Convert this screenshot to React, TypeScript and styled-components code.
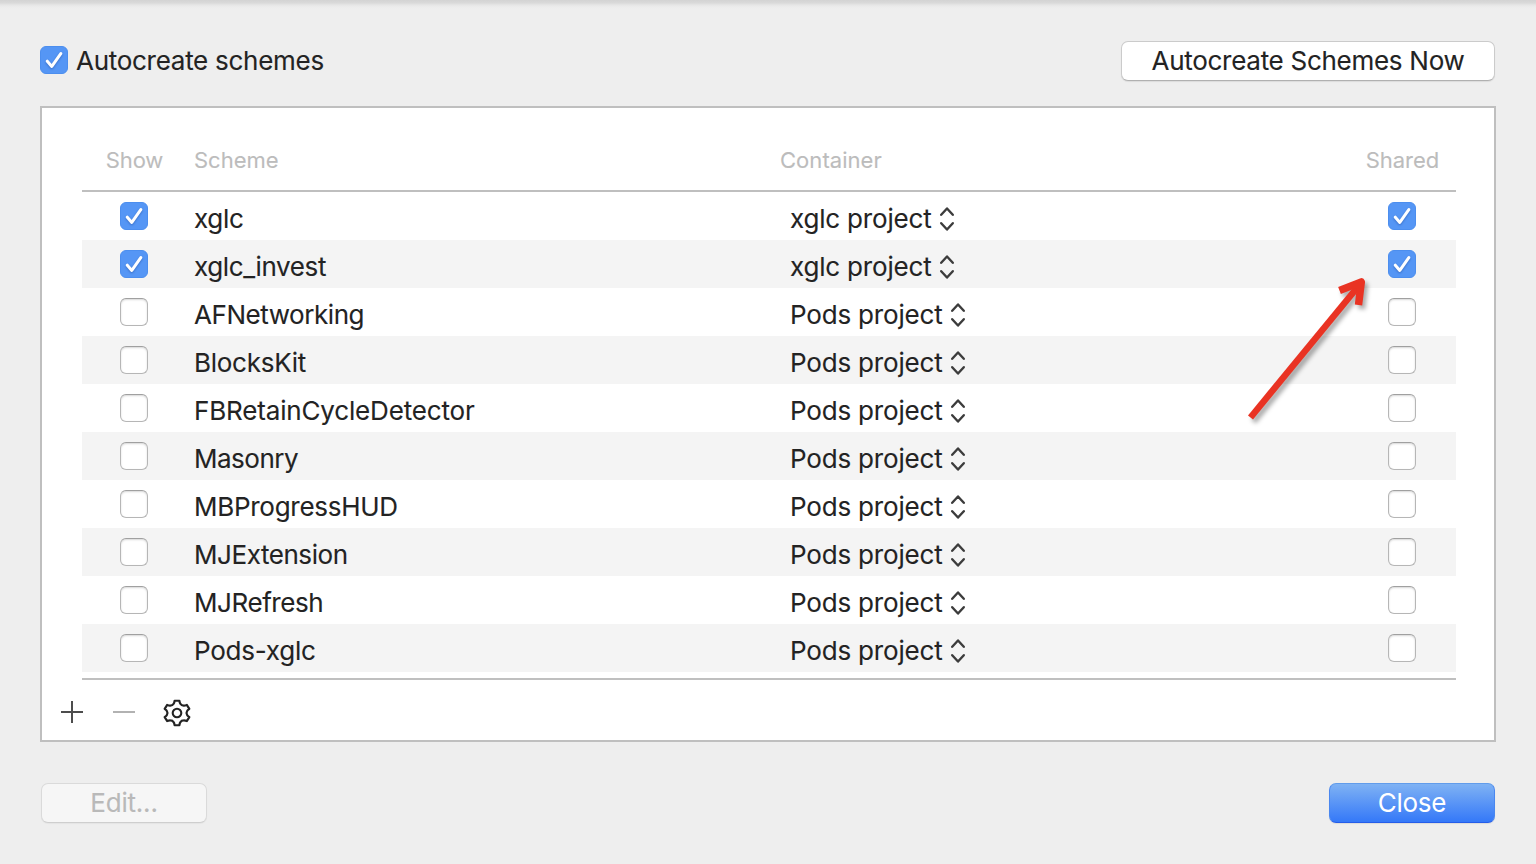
import React from 'react';
import styled, { createGlobalStyle, css } from 'styled-components';

const GlobalStyle = createGlobalStyle`
  * { box-sizing: border-box; }
  html, body, #root { height: 100%; }
  body {
    margin: 0;
    overflow: hidden;
    background: #eeeeee;
    color: #232323;
    font-family: Inter, 'Liberation Sans', sans-serif;
    font-size: 26px;
    line-height: 32px;
  }
`;

const Sheet = styled.main`
  position: relative;
  display: flex;
  flex-direction: column;
  width: 1536px;
  height: 864px;
  padding: 41px 40px 0;
  background: linear-gradient(#d3d3d3 0, #dadada 3px, #e6e6e6 5px, #ececec 7px, #eeeeee 9px);
`;

const TopBar = styled.header`
  display: flex;
  justify-content: space-between;
  height: 65px;
  padding-right: 1px;
`;

const CheckLabel = styled.label`
  display: flex;
  align-items: center;
  gap: 8px;
  height: 38px;
`;

const Text = styled.span<{ $spacing?: number }>`
  white-space: nowrap;
  letter-spacing: ${(p) => p.$spacing ?? 0}px;
  -webkit-text-stroke: 0.1px currentColor;
`;

const LabelText = styled(Text)`
  padding-top: 2px;
`;

const PushButton = styled.button<{ $width: number; $kind?: 'primary' | 'disabled' }>`
  width: ${(p) => p.$width}px;
  height: 40px;
  padding: 0;
  border: 1px solid #cbcbcb;
  border-bottom-color: #b0b0b0;
  border-radius: 7px;
  background: #ffffff;
  box-shadow: 0 1px 1px rgba(0, 0, 0, 0.08);
  color: #232323;
  font: inherit;
  line-height: 38px;
  ${(p) => p.$kind === 'disabled' && css`
    border-color: #dadada;
    border-bottom-color: #cecece;
    background: #f6f6f6;
    box-shadow: 0 1px 1px rgba(0, 0, 0, 0.04);
    color: #b9b9b9;
  `}
  ${(p) => p.$kind === 'primary' && css`
    border-color: #619ceb #4a87ef #255de9;
    background: linear-gradient(#7fb2f4, #3478f8);
    color: #ffffff;
    ${Text} { -webkit-text-stroke: 0; }
  `}
`;

const Panel = styled.section`
  display: flex;
  flex-direction: column;
  height: 636px;
  padding: 0 38px 0 40px;
  border: 2px solid #bfbfbf;
  background: #ffffff;
`;

const columns = css`
  display: grid;
  grid-template-columns: 104px 594px 568px 108px;
  align-items: center;
`;

const Cell = styled.div<{ $center?: boolean; $indent?: number }>`
  display: flex;
  align-items: center;
  justify-content: ${(p) => (p.$center ? 'center' : 'flex-start')};
  gap: 7px;
  height: 100%;
  padding-top: ${(p) => (p.$center ? 0 : 6)}px;
  padding-left: ${(p) => p.$indent ?? 0}px;
`;

const HeaderRow = styled.div`
  ${columns}
  height: 84px;
  padding-top: 22px;
  border-bottom: 2px solid #bfbfbf;
  color: #bcbcbc;
  font-size: 22px;
  line-height: 28px;
  ${Cell} { padding-top: 0; }
`;

const Rows = styled.div`
  height: 488px;
  border-bottom: 2px solid #bfbfbf;
`;

const Row = styled.div`
  ${columns}
  height: 48px;
  &:nth-child(even) { background: #f4f4f4; }
`;

const Box = styled.span<{ $on: boolean }>`
  display: block;
  width: 28px;
  height: 28px;
  border: 1px solid ${(p) => (p.$on ? '#4c8eee' : '#b6b6b6')};
  border-top-color: ${(p) => (p.$on ? '#4c8eee' : '#a0a0a0')};
  border-radius: 6px;
  background: ${(p) => (p.$on ? '#5596f5' : '#ffffff')};
  box-shadow: ${(p) => (p.$on ? 'none' : 'inset 0 1px 2px rgba(0, 0, 0, 0.16)')};
  svg {
    display: block;
    filter: drop-shadow(0 1px 1px rgba(20, 60, 140, 0.45));
  }
`;

const Tools = styled.div`
  display: flex;
  align-items: center;
  height: 60px;
  margin-left: -21px;
  padding-top: 4px;
  svg { display: block; }
`;

const BottomBar = styled.footer`
  display: flex;
  justify-content: space-between;
  padding: 41px 1px 0;
`;

const Pointer = styled.svg`
  position: absolute;
  left: 1240px;
  top: 268px;
  overflow: visible;
  filter: drop-shadow(3px 4px 2px rgba(0, 0, 0, 0.32));
`;

function Checkbox({ on }: { on: boolean }) {
  return (
    <Box $on={on}>
      {on && (
        <svg width="26" height="26" viewBox="0 0 26 26" fill="none">
          <path d="M6.300 14.200L10.800 19.400L19.800 6.600" stroke="#fff" strokeWidth="3" strokeLinecap="round" strokeLinejoin="round" />
        </svg>
      )}
    </Box>
  );
}

function Stepper() {
  return (
    <svg width="16" height="26" viewBox="0 0 16 26" fill="none" stroke="#3c3c3c" strokeWidth="2.4" strokeLinecap="round" strokeLinejoin="round">
      <path d="M2.200 8.800L8 2.500L13.800 8.800M2.200 17.200L8 23.500L13.800 17.200" />
    </svg>
  );
}

function gearPath() {
  const turn = (x: number, y: number, k: number) => {
    const a = (k * Math.PI) / 3;
    return `${(x * Math.cos(a) - y * Math.sin(a)).toFixed(2)} ${(x * Math.sin(a) + y * Math.cos(a)).toFixed(2)}`;
  };
  let d = `M${turn(-2.3, -12.2, 0)}`;
  for (let k = 0; k < 6; k++) {
    d += `L${turn(2.3, -12.2, k)}`;
    d += `Q${turn(2.6, -9.9, k)} ${turn(3.2, -9.2, k)}`;
    d += `Q${turn(4.25, -7.36, k)} ${turn(-3.2, -9.2, k + 1)}`;
    d += `Q${turn(-2.6, -9.9, k + 1)} ${turn(-2.3, -12.2, k + 1)}`;
  }
  return `${d}Z`;
}

function Toolbar() {
  return (
    <Tools>
      <svg width="130" height="32" viewBox="0 0 130 32" fill="none">
        <path d="M0 16H22M11 5V27" stroke="#4d4d4d" strokeWidth="2" />
        <path d="M52 16H74" stroke="#b2b2b2" strokeWidth="2" />
        <g transform="translate(116 17)" stroke="#232323" strokeWidth="2.1" strokeLinejoin="round">
          <path d={gearPath()} transform="scale(1.05 1)" />
          <circle r="4.3" />
        </g>
      </svg>
    </Tools>
  );
}

const schemes = [
  { name: 'xglc', container: 'xglc project', on: true, spacing: -0.3 },
  { name: 'xglc_invest', container: 'xglc project', on: true, spacing: -0.38 },
  { name: 'AFNetworking', container: 'Pods project', on: false, spacing: -0.44 },
  { name: 'BlocksKit', container: 'Pods project', on: false, spacing: -0.27 },
  { name: 'FBRetainCycleDetector', container: 'Pods project', on: false, spacing: -0.16 },
  { name: 'Masonry', container: 'Pods project', on: false, spacing: -0.5 },
  { name: 'MBProgressHUD', container: 'Pods project', on: false, spacing: -0.28 },
  { name: 'MJExtension', container: 'Pods project', on: false, spacing: -0.44 },
  { name: 'MJRefresh', container: 'Pods project', on: false, spacing: -0.42 },
  { name: 'Pods-xglc', container: 'Pods project', on: false, spacing: -0.24 },
];

export default function App() {
  return (
    <>
      <GlobalStyle />
      <Sheet>
        <TopBar>
          <CheckLabel>
            <Checkbox on />
            <LabelText $spacing={-0.28}>Autocreate schemes</LabelText>
          </CheckLabel>
          <PushButton $width={374}><Text $spacing={-0.28}>Autocreate Schemes Now</Text></PushButton>
        </TopBar>
        <Panel>
          <HeaderRow>
            <Cell $center $indent={1}><Text $spacing={-0.1}>Show</Text></Cell>
            <Cell $indent={8}><Text>Scheme</Text></Cell>
            <Cell><Text $spacing={0.05}>Container</Text></Cell>
            <Cell $center $indent={1}><Text>Shared</Text></Cell>
          </HeaderRow>
          <Rows>
            {schemes.map((s) => (
              <Row key={s.name}>
                <Cell $center><Checkbox on={s.on} /></Cell>
                <Cell $indent={8}><Text $spacing={s.spacing}>{s.name}</Text></Cell>
                <Cell $indent={10}>
                  <Text $spacing={-0.18}>{s.container}</Text>
                  <Stepper />
                </Cell>
                <Cell $center><Checkbox on={s.on} /></Cell>
              </Row>
            ))}
          </Rows>
          <Toolbar />
        </Panel>
        <BottomBar>
          <PushButton $width={166} $kind="disabled"><Text $spacing={-0.2}>Edit...</Text></PushButton>
          <PushButton $width={166} $kind="primary"><Text $spacing={-0.3}>Close</Text></PushButton>
        </BottomBar>
        <Pointer width="130" height="156" viewBox="0 0 130 156" fill="none" stroke="#e93323" strokeLinejoin="round">
          <path d="M10.500 149.500L121 15" strokeWidth="6.5" />
          <path d="M99.500 22.500L121.300 14L118.500 37" strokeWidth="7.5" />
        </Pointer>
      </Sheet>
    </>
  );
}
